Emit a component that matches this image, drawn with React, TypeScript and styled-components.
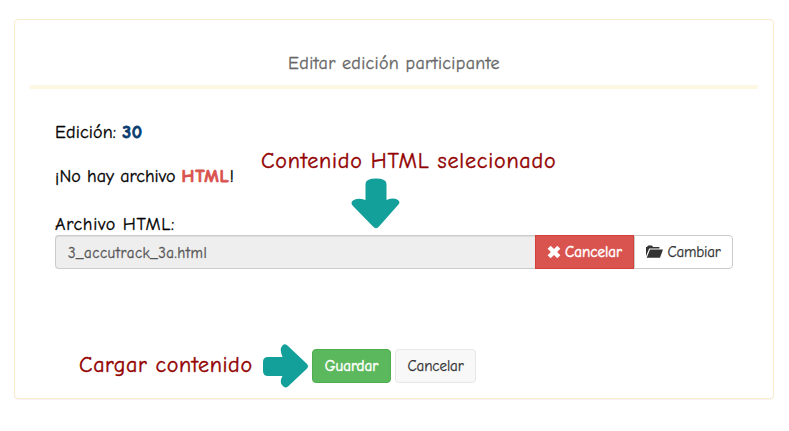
import React from "react";
import styled, { createGlobalStyle, css } from "styled-components";

const GlobalStyle = createGlobalStyle`
  * { box-sizing: border-box; }
  body {
    margin: 0;
    background: #fff;
    color: #000;
    font-family: "Comic Sans MS", "Comic Neue", Lato, sans-serif;
    font-size: 18px;
    line-height: 24px;
    -webkit-text-stroke: 0.3px currentColor;
  }
`;

const Page = styled.main`
  position: relative;
  height: 431px;
  padding: 19px 15px 0 14px;
  overflow: hidden;
`;

const Card = styled.section`
  height: 380px;
  padding: 0 15px;
  border: 1px solid #faebcc;
  border-radius: 4px;
  box-shadow: 0 1px 1px rgba(0, 0, 0, 0.05);
`;

const Header = styled.header`
  height: 69px;
  padding-top: 32px;
  border-bottom: 4px solid #fcf8e3;
  color: #666;
  text-align: center;
  white-space: nowrap;
`;

const Text = styled.span<{ $spacing?: number }>`
  letter-spacing: ${(p) => p.$spacing ?? 0}px;
`;

const Form = styled.form`
  padding: 32px 25px 0;
`;

const Line = styled.p<{ $gap: number }>`
  margin: 0 0 ${(p) => p.$gap}px;
  height: 24px;
  white-space: nowrap;
`;

const Strong = styled.strong<{ $color: string; $spacing?: number }>`
  color: ${(p) => p.$color};
  font-weight: 900;
  letter-spacing: ${(p) => p.$spacing ?? 0}px;
  -webkit-text-stroke: 0.8px currentColor;
`;

const FileGroup = styled.div`
  display: flex;
  height: 34px;
`;

const FileName = styled.div`
  flex: 1;
  padding: 5px 12px;
  border: 1px solid #ccc;
  border-right: 0;
  border-radius: 4px 0 0 4px;
  background: #eee;
  box-shadow: inset 0 1px 1px rgba(0, 0, 0, 0.075);
  color: #555;
  font-size: 15px;
`;

const tones = {
  danger: css`
    color: #fff;
    background: #d9534f;
    border-color: #d43f3a;
    -webkit-text-stroke-width: 0.5px;
  `,
  plain: css`
    color: #333;
    background: #fff;
    border-color: #ccc;
  `,
  success: css`
    color: #fff;
    background: #5cb85c;
    border-color: #4cae4c;
    -webkit-text-stroke-width: 0.5px;
  `,
  light: css`
    color: #333;
    background: #f8f8f8;
    border-color: #e7e7e7;
  `,
};

const Button = styled.button<{
  $tone: keyof typeof tones;
  $width: number;
  $radius?: string;
}>`
  display: flex;
  align-items: center;
  justify-content: center;
  gap: 4px;
  width: ${(p) => p.$width}px;
  height: 34px;
  padding: 0 0 1px;
  border: 1px solid;
  border-radius: ${(p) => p.$radius ?? "4px"};
  font: 15px/20px "Comic Sans MS", "Comic Neue", Lato, sans-serif;
  white-space: nowrap;
  -webkit-text-stroke: 0.25px currentColor;
  ${(p) => tones[p.$tone]}
`;

const Actions = styled.div`
  display: flex;
  gap: 4px;
  margin: 80px 0 0 257px;
`;

const Note = styled.div<{ $x: number; $y: number; $spacing: number }>`
  position: absolute;
  left: ${(p) => p.$x}px;
  top: ${(p) => p.$y}px;
  color: #920000;
  font-size: 22px;
  line-height: 28px;
  letter-spacing: ${(p) => p.$spacing}px;
  white-space: nowrap;
  -webkit-text-stroke: 0.4px currentColor;
`;

const Arrow = styled.svg<{ $x: number; $y: number }>`
  position: absolute;
  left: ${(p) => p.$x}px;
  top: ${(p) => p.$y}px;
  fill: #13a09a;
`;

const CrossIcon = () => (
  <svg width="14" height="14" viewBox="0 0 14 14" fill="currentColor">
    <path d="M3.7.7 7 4l3.3-3.3L13.4 3.8 10.1 7l3.3 3.2-3.1 3.1L7 10l-3.3 3.3-3.1-3.1L3.9 7 .6 3.8Z" />
  </svg>
);

const FolderIcon = () => (
  <svg width="17" height="13" viewBox="0 0 17 13" fill="currentColor">
    <path d="M0 11.2V2h1L2 .5h4L7 2h6.4v1.5H3.2Z" />
    <path d="M4 4.6h13L14 12.8H.7Z" />
  </svg>
);

export default function App() {
  return (
    <>
      <GlobalStyle />
      <Page>
        <Card>
          <Header>
            <Text $spacing={0.33}>Editar edición participante</Text>
          </Header>
          <Form onSubmit={(e) => e.preventDefault()}>
            <Line $gap={20}>
              <Text $spacing={0.15}>Edición: </Text>
              <Strong $color="#083c70" $spacing={0.5}>30</Strong>
            </Line>
            <Line $gap={24}>
              <Text $spacing={0.05}>¡No hay archivo </Text>
              <Strong $color="#d9534f" $spacing={0.8}>HTML</Strong>!
            </Line>
            <Line $gap={-2}>
              <Text $spacing={0.7}>Archivo HTML:</Text>
            </Line>
            <FileGroup>
              <FileName>
                <Text $spacing={0.48}>3_accutrack_3a.html</Text>
              </FileName>
              <Button type="button" $tone="danger" $width={99} $radius="0">
                <CrossIcon />
                <Text>Cancelar</Text>
              </Button>
              <Button type="button" $tone="plain" $width={99} $radius="0 4px 4px 0">
                <FolderIcon />
                <Text $spacing={-0.2}>Cambiar</Text>
              </Button>
            </FileGroup>
            <Actions>
              <Button type="submit" $tone="success" $width={79}>
                <Text>Guardar</Text>
              </Button>
              <Button type="button" $tone="light" $width={81}>
                <Text $spacing={-0.1}>Cancelar</Text>
              </Button>
            </Actions>
          </Form>
        </Card>
        <Note $x={261} $y={147} $spacing={0.8}>Contenido HTML selecionado</Note>
        <Arrow $x={351} $y={178} width="49" height="51" viewBox="0 0 49 51">
          <path d="M14.500 6Q14.500 .5 25 .5T35.500 6V22Q44 19 47.500 22.500 49.500 24.500 47 27L28 48.500Q25 52 22 48.500L2 28Q-1 24.500 2 22.500 6 19.500 14.500 22Z" />
        </Arrow>
        <Note $x={79} $y={351} $spacing={0.63}>Cargar contenido</Note>
        <Arrow $x={263} $y={344} width="46" height="45" viewBox="0 0 46 45">
          <path d="M5 13H19.500Q16 5 19.500 1.500 22 -1 25 2L43.500 19.500Q46.500 22 43.500 25L25 42.500Q22 45 19.500 41.500 16 38 19.500 32H5Q0 32 0 27V18Q0 13 5 13Z" />
        </Arrow>
      </Page>
    </>
  );
}
